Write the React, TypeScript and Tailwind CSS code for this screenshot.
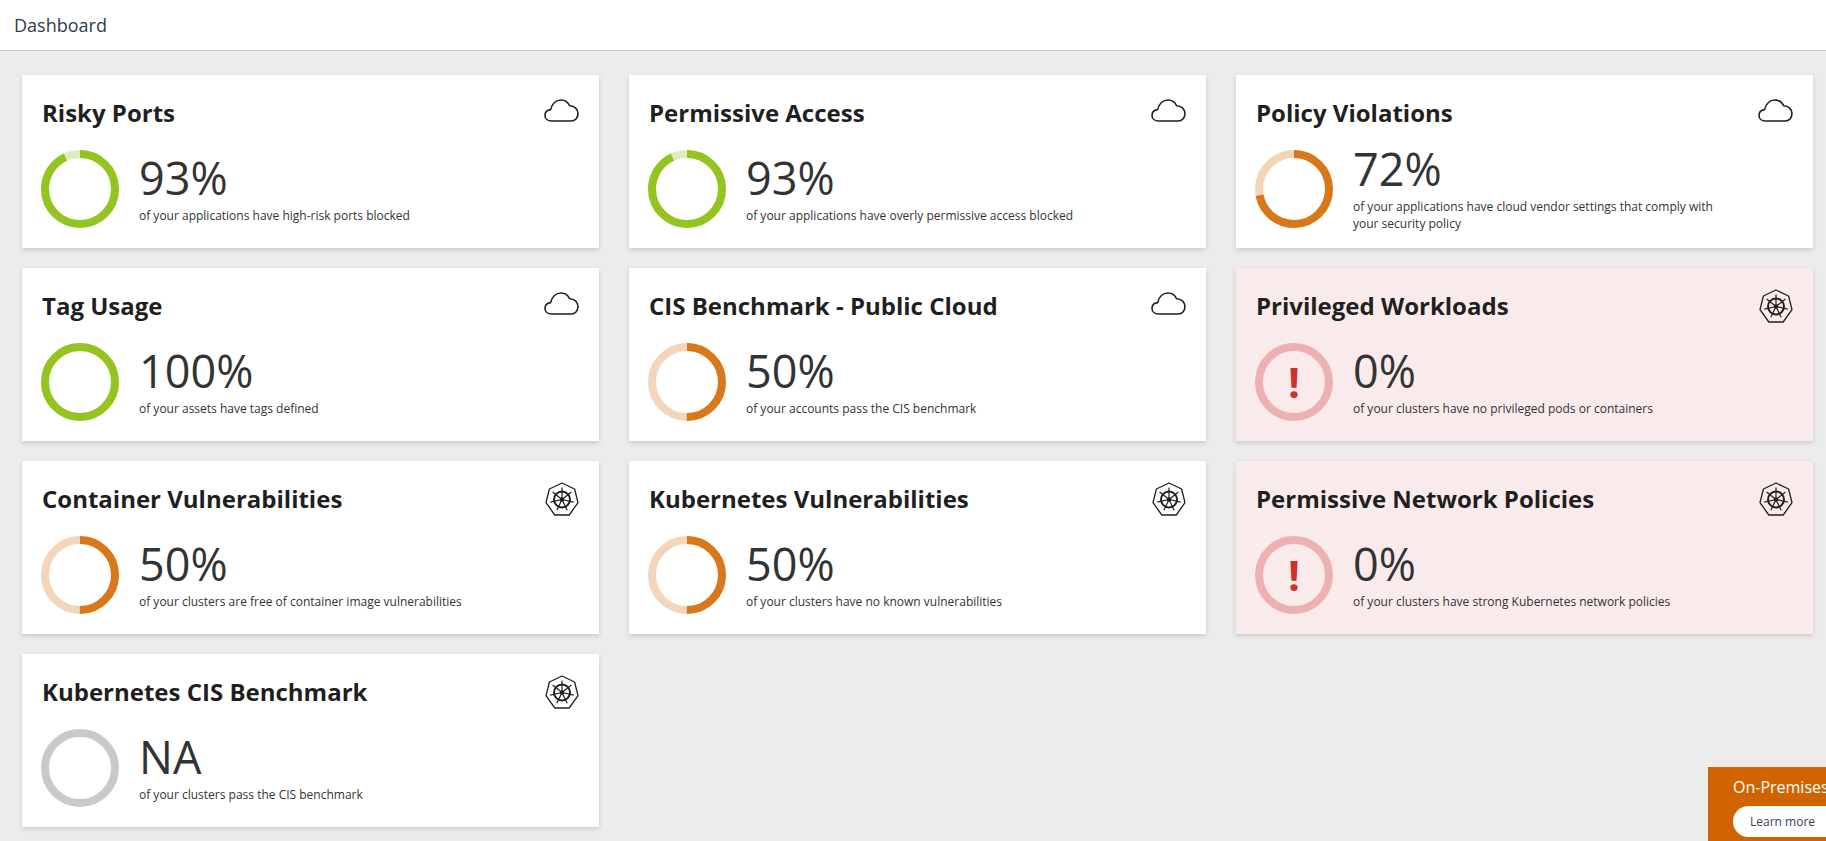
const cards = [
  { title: "Risky Ports", value: 93, label: "93%", text: "of your applications have high-risk ports blocked", icon: "cloud", tone: "green" },
  { title: "Permissive Access", value: 93, label: "93%", text: "of your applications have overly permissive access blocked", icon: "cloud", tone: "green" },
  { title: "Policy Violations", value: 72, label: "72%", text: "of your applications have cloud vendor settings that comply with your security policy", icon: "cloud", tone: "orange" },
  { title: "Tag Usage", value: 100, label: "100%", text: "of your assets have tags defined", icon: "cloud", tone: "green" },
  { title: "CIS Benchmark - Public Cloud", value: 50, label: "50%", text: "of your accounts pass the CIS benchmark", icon: "cloud", tone: "orange" },
  { title: "Privileged Workloads", value: 0, label: "0%", text: "of your clusters have no privileged pods or containers", icon: "k8s", tone: "red" },
  { title: "Container Vulnerabilities", value: 50, label: "50%", text: "of your clusters are free of container image vulnerabilities", icon: "k8s", tone: "orange" },
  { title: "Kubernetes Vulnerabilities", value: 50, label: "50%", text: "of your clusters have no known vulnerabilities", icon: "k8s", tone: "orange" },
  { title: "Permissive Network Policies", value: 0, label: "0%", text: "of your clusters have strong Kubernetes network policies", icon: "k8s", tone: "red" },
  { title: "Kubernetes CIS Benchmark", value: 0, label: "NA", text: "of your clusters pass the CIS benchmark", icon: "k8s", tone: "gray" },
];

const tones: Record<string, { fg: string; bg: string }> = {
  green: { fg: "#93c41f", bg: "#dfebbc" },
  orange: { fg: "#d9781a", bg: "#f3d6b9" },
  red: { fg: "#eeb1b1", bg: "#eeb1b1" },
  gray: { fg: "#c9c9c9", bg: "#c9c9c9" },
};

const CloudIcon = () => (
  <svg width="35" height="23" viewBox="0 0 35 23" fill="none" stroke="#1f1f1f" strokeWidth="1.6" className="mt-[2px]">
    <path d="M7.5 22 C3.8 22 1 19.8 1 16.4 C1 13 3.4 10.9 6.6 10.6 C8 5 12 1 17 1 C20.8 1 24 3.2 25.6 6.8 C30.6 6.8 34 10.4 34 14.6 C34 19 31 22 27 22 Z" strokeLinejoin="round" />
  </svg>
);

const K8sIcon = () => {
  const spokes = [0, 1, 2, 3, 4, 5, 6].map((k) => {
    const a = ((-90 + (k * 360) / 7) * Math.PI) / 180;
    return { x: 17 + 12 * Math.cos(a), y: 17.5 + 12 * Math.sin(a) };
  });
  return (
    <svg width="34" height="35" viewBox="0 0 34 35" fill="none" stroke="#1f1f1f" className="-mt-px">
      <polygon points="17,1 29.6,7 33,20.6 24.2,33 9.8,33 1,20.6 4.4,7" strokeWidth="1.3" strokeLinejoin="round" />
      <circle cx="17" cy="17.5" r="8" strokeWidth="2" />
      <circle cx="17" cy="17.5" r="2.2" fill="#1f1f1f" stroke="none" />
      {spokes.map((s, i) => (
        <line key={i} x1="17" y1="17.5" x2={s.x} y2={s.y} strokeWidth="1.2" />
      ))}
    </svg>
  );
};

const Ring = ({ value, tone }: { value: number; tone: string }) => {
  const c = tones[tone];
  const r = 35;
  const len = 2 * Math.PI * r;
  return (
    <div className="relative w-[78px] h-[78px] shrink-0 -ml-px">
      <svg width="78" height="78" viewBox="0 0 78 78" className="-rotate-90">
        <circle cx="39" cy="39" r={r} fill="none" stroke={c.bg} strokeWidth="8" />
        <circle cx="39" cy="39" r={r} fill="none" stroke={c.fg} strokeWidth="8" strokeDasharray={`${(len * value) / 100} ${len}`} />
      </svg>
      {tone === "red" && (
        <span className="absolute inset-0 flex items-center justify-center text-[42px] leading-none font-bold text-[#cf3030]">!</span>
      )}
    </div>
  );
};

const Card = ({ card }: { card: (typeof cards)[number] }) => (
  <div className={`h-[173px] px-5 pt-[22px] shadow-[0_2px_5px_rgba(0,0,0,0.15)] ${card.tone === "red" ? "bg-[#f9ebeb]" : "bg-white"}`}>
    <div className="flex justify-between items-start h-[53px]">
      <h3 className="text-[24px] leading-[32px] font-bold text-[#1f1f1f]">{card.title}</h3>
      <div className="flex justify-center w-[35px]">{card.icon === "cloud" ? <CloudIcon /> : <K8sIcon />}</div>
    </div>
    <div className="flex items-center gap-[20px] h-[78px]">
      <Ring value={card.value} tone={card.tone} />
      <div className="w-[370px] pb-[2px]">
        <div className="text-[45px] leading-[50px] font-medium text-[#333333]">{card.label}</div>
        <p className="mt-[4px] text-[12px] leading-[17px] text-[#333333]">{card.text}</p>
      </div>
    </div>
  </div>
);

export default function App() {
  return (
    <div className="relative h-[841px] overflow-hidden bg-[#ececec] font-['Open_Sans',sans-serif]">
      <header className="h-[51px] pl-[14px] flex items-center bg-white border-b border-[#c8c8c8] text-[18px] text-[#2f3b4c]">
        Dashboard
      </header>
      <main className="grid grid-cols-[577px_577px_577px] gap-x-[30px] gap-y-[20px] pl-[22px] pt-[24px]">
        {cards.map((card) => (
          <Card key={card.title} card={card} />
        ))}
      </main>
      <aside className="absolute left-[1708px] top-[767px] w-[118px] h-[74px] overflow-hidden bg-[#d16400] pl-[25px] pt-[8px]">
        <div className="w-[200px] text-[16px] leading-[24px] text-white">On-Premises</div>
        <button className="mt-[7px] w-[120px] h-[31px] rounded-full bg-white text-[12px] text-[#33415c] text-left pl-[17px]">Learn more</button>
      </aside>
    </div>
  );
}
